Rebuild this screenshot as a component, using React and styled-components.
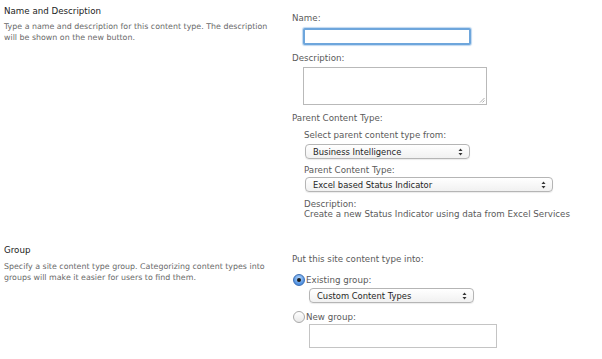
import React from "react";
import styled, { createGlobalStyle } from "styled-components";

const GlobalStyle = createGlobalStyle`
  html, body {
    margin: 0;
    padding: 0;
    background: #ffffff;
  }
  body {
    font-family: "DejaVu Sans", Verdana, sans-serif;
    color: #555;
  }
`;

const Page = styled.div`
  width: 602px;
  height: 359px;
  overflow: hidden;
  background: #fff;
`;

const Section = styled.div`
  display: grid;
  grid-template-columns: 292px 1fr;
  margin-top: ${(p) => p.$top || 0}px;
`;

const Info = styled.div`
  padding: 5px 0 0 4px;
`;

const Heading = styled.div`
  font-size: 8.7px;
  line-height: 12px;
  color: #222;
`;

const Blurb = styled.div`
  margin-top: ${(p) => p.$top || 5}px;
  font-size: 7.9px;
  line-height: 10.5px;
  color: #6a6a6a;
  width: 272px;
`;

const Fields = styled.div`
  padding-top: ${(p) => p.$pad || 12}px;
  display: flex;
  flex-direction: column;
  align-items: flex-start;
`;

const Label = styled.div`
  font-size: 8.7px;
  line-height: 12px;
  color: #5a5a5a;
  white-space: nowrap;
  margin-top: ${(p) => p.$top || 0}px;
`;

const Indent = styled.div`
  padding-left: ${(p) => p.$left || 12}px;
  display: flex;
  flex-direction: column;
  align-items: flex-start;
`;

const TextBox = styled.div`
  box-sizing: border-box;
  width: ${(p) => p.$w}px;
  height: ${(p) => p.$h}px;
  margin: ${(p) => p.$top || 0}px 0 0 ${(p) => p.$left || 11}px;
  border: 1px solid #c4c4c4;
  background: #fff;
`;

const FocusBox = styled.div`
  box-sizing: border-box;
  width: 168px;
  height: 17px;
  margin: 4px 0 0 11px;
  border: 2px solid #6ea6dc;
  border-radius: 2px;
  box-shadow: 0 0 1px 1px rgba(110, 166, 220, 0.45);
  background: #fff;
`;

const Area = styled.div`
  position: relative;
  box-sizing: border-box;
  width: 184px;
  height: 38px;
  margin: 3px 0 0 11px;
  border: 1px solid #b9b9b9;
  background: #fff;
`;

const Grip = styled.svg`
  position: absolute;
  right: 1px;
  bottom: 1px;
`;

const Select = styled.div`
  box-sizing: border-box;
  display: flex;
  align-items: center;
  justify-content: space-between;
  width: ${(p) => p.$w}px;
  height: 15px;
  margin: ${(p) => p.$top || 0}px 0 0 ${(p) => p.$left || 1}px;
  padding: 0 6px 0 7px;
  border: 1px solid #b5b5b5;
  border-radius: 4px;
  background: linear-gradient(#ffffff, #f1f1f1);
  box-shadow: 0 1px 1px rgba(0, 0, 0, 0.08);
  font-size: 8.4px;
  color: #1e1e1e;
  white-space: nowrap;
`;

const Note = styled.div`
  margin-top: 7px;
  font-size: 8.7px;
  line-height: 10px;
  color: #5a5a5a;
  white-space: nowrap;
`;

const RadioRow = styled.label`
  display: flex;
  align-items: center;
  gap: 1px;
  margin-top: ${(p) => p.$top || 0}px;
  margin-left: 1px;
  font-size: 8.7px;
  color: #5a5a5a;
`;

const Radio = styled.span`
  box-sizing: border-box;
  width: 12px;
  height: 12px;
  border-radius: 50%;
  display: flex;
  align-items: center;
  justify-content: center;
  border: 1px solid ${(p) => (p.$on ? "#3d6fb3" : "#a9a9a9")};
  background: ${(p) =>
    p.$on
      ? "radial-gradient(circle at 50% 35%, #bcdcff, #4d8fe0 70%)"
      : "linear-gradient(#ffffff, #e9e9e9)"};
  &::after {
    content: "";
    display: ${(p) => (p.$on ? "block" : "none")};
    width: 4px;
    height: 4px;
    border-radius: 50%;
    background: #1a1a1a;
  }
`;

function Arrows() {
  return (
    <svg width="5" height="8" viewBox="0 0 5 8">
      <path d="M2.5 0.5 L4.5 3 H0.5 Z" fill="#333" />
      <path d="M2.5 7.5 L4.5 5 H0.5 Z" fill="#333" />
    </svg>
  );
}

function Dropdown({ value, width, top, left }) {
  return (
    <Select $w={width} $top={top} $left={left}>
      <span>{value}</span>
      <Arrows />
    </Select>
  );
}

export default function App() {
  return (
    <Page>
      <GlobalStyle />
      <Section>
        <Info>
          <Heading>Name and Description</Heading>
          <Blurb $top={5}>
            Type a name and description for this content type. The description
            will be shown on the new button.
          </Blurb>
        </Info>
        <Fields $pad={12}>
          <Label>Name:</Label>
          <FocusBox />
          <Label $top={7}>Description:</Label>
          <Area>
            <Grip width="6" height="6" viewBox="0 0 6 6">
              <path d="M1 5.5 L5.5 1 M3.5 5.5 L5.5 3.5" stroke="#999" strokeWidth="0.8" />
            </Grip>
          </Area>
          <Label $top={7}>Parent Content Type:</Label>
          <Indent $left={12}>
            <Label $top={5}>Select parent content type from:</Label>
            <Dropdown value="Business Intelligence" width={165} top={3} />
            <Label $top={5}>Parent Content Type:</Label>
            <Dropdown value="Excel based Status Indicator" width={248} top={1} />
            <Note>
              Description:
              <br />
              Create a new Status Indicator using data from Excel Services
            </Note>
          </Indent>
        </Fields>
      </Section>
      <Section $top={20}>
        <Info>
          <Heading>Group</Heading>
          <Blurb $top={6}>
            Specify a site content type group. Categorizing content types into
            groups will make it easier for users to find them.
          </Blurb>
        </Info>
        <Fields $pad={14}>
          <Label>Put this site content type into:</Label>
          <RadioRow $top={9}>
            <Radio $on />
            Existing group:
          </RadioRow>
          <Dropdown value="Custom Content Types" width={165} top={2} left={17} />
          <RadioRow $top={8}>
            <Radio />
            New group:
          </RadioRow>
          <TextBox $w={188} $h={24} $top={1} $left={17} />
        </Fields>
      </Section>
    </Page>
  );
}
